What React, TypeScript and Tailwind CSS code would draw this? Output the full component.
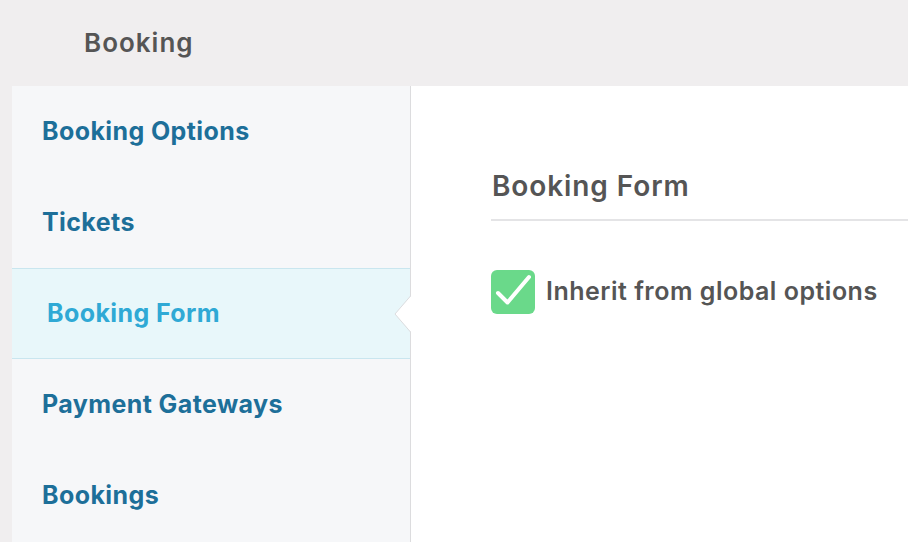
import React from "react"

const items = ["Booking Options", "Tickets", "Booking Form", "Payment Gateways", "Bookings"]

export default function App() {
  const active = "Booking Form"
  return (
    <div className="w-[908px] h-[542px] overflow-hidden bg-[#f0eeef] flex flex-col font-['Inter','Noto_Sans',sans-serif]">
      {/* Header */}
      <div className="h-[86px] shrink-0 pl-[84px] pt-[25px]">
        <h1 className="text-[26px] font-semibold text-[#555] leading-[36px] tracking-[1px]">Booking</h1>
      </div>

      <div className="flex flex-1 pl-[12px]">
        {/* Sidebar */}
        <div className="w-[399px] shrink-0 bg-[#f6f7f9] border-r border-[#dcdcde] flex flex-col">
          {items.map((label) => {
            const isActive = label === active
            return (
              <div
                key={label}
                className={`relative h-[91px] flex items-center shrink-0 ${
                  isActive
                    ? "bg-[#e8f7fa] border-y border-[#c9e6ef] pl-[35px]"
                    : "pl-[30px]"
                }`}
              >
                <span
                  className={`text-[25px] font-bold tracking-[0.4px] ${
                    isActive ? "text-[#2fa9d5]" : "text-[#1d6f99]"
                  }`}
                >
                  {label}
                </span>
                {isActive && (
                  <svg
                    className="absolute right-[-1px] top-1/2 -translate-y-1/2"
                    width="17"
                    height="36"
                    viewBox="0 0 17 36"
                  >
                    <path d="M17 0 L1 18 L17 36 Z" fill="#fff" />
                    <path d="M16.5 0 L1 18 L16.5 36" fill="none" stroke="#dcdcde" strokeWidth="1" />
                  </svg>
                )}
              </div>
            )
          })}
        </div>

        {/* Main panel */}
        <div className="flex-1 bg-white pl-[80px] pt-[82px]">
          <h2 className="text-[28px] font-semibold text-[#555] leading-[36px] pl-[1px] tracking-[0.9px]">Booking Form</h2>
          <div className="mt-[15px] h-[2px] bg-[#e4e4e6]" />
          <label className="mt-[49px] flex items-center gap-[11px]">
            <span className="w-[44px] h-[44px] rounded-[6px] bg-[#6ad98a] flex items-center justify-center relative">
              <svg width="44" height="44" viewBox="0 0 44 44" className="absolute inset-0 overflow-visible">
                <path
                  d="M7 23 L16.5 32.5 L38 7"
                  fill="none"
                  stroke="#fff"
                  strokeWidth="4"
                  strokeLinecap="round"
                  strokeLinejoin="round"
                />
              </svg>
            </span>
            <span className="text-[25px] font-semibold text-[#555] tracking-[0.5px]">Inherit from global options</span>
          </label>
        </div>
      </div>
    </div>
  )
}
